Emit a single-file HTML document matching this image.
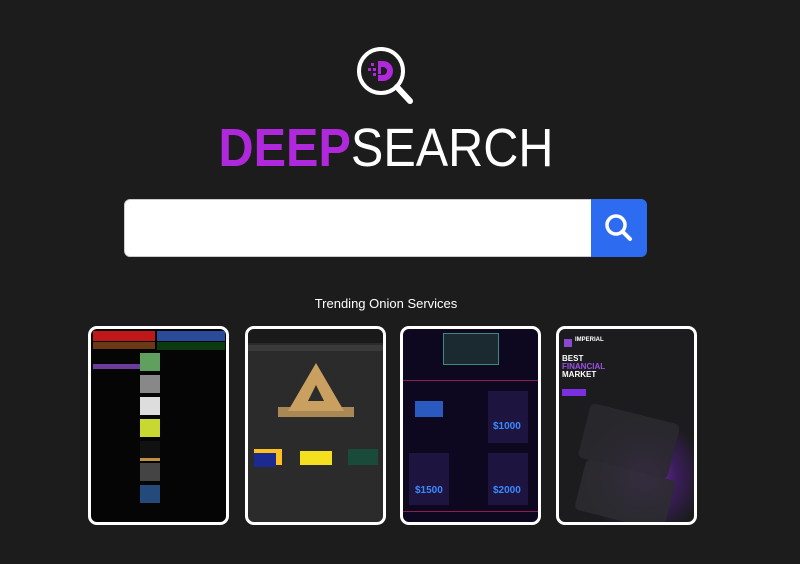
<!DOCTYPE html>
<html><head><meta charset="utf-8"><style>
*{margin:0;padding:0;box-sizing:border-box}
body{width:800px;height:564px;background:#1d1c1d;font-family:"Liberation Sans",sans-serif;position:relative;overflow:hidden}
.abs{position:absolute}
.logo{left:0;width:772px;top:121px;text-align:center;font-size:54px;letter-spacing:0px;line-height:54px;transform:scaleX(0.9);transform-origin:386px 0}
.logo b{color:#b028dc;font-weight:700}
.logo span{color:#fff;font-weight:400}
.search{left:124px;top:199px;width:468px;height:58px;background:#fff;border-radius:6px 0 0 6px;border:1px solid #ccc}
.btn{left:591px;top:199px;width:56px;height:58px;background:#2d6cf1;border-radius:0 6px 6px 0}
.tr{left:0;width:772px;top:296px;text-align:center;color:#fff;font-size:13px}
.card{top:326px;width:141px;height:199px;border:3px solid #fff;border-radius:9px;overflow:hidden}
</style></head><body>
<svg class="abs" style="left:354px;top:44px" width="64" height="64" viewBox="0 0 64 64">
<circle cx="27" cy="27" r="22" fill="none" stroke="#fff" stroke-width="4"/>
<line x1="43" y1="43" x2="56" y2="57" stroke="#fff" stroke-width="6" stroke-linecap="round"/>
<path d="M24 17h5a10 10 0 0 1 0 20h-5v-6h5a4 4 0 0 0 0-8h-2v7h-3z" fill="#b028dc"/>
<rect x="17" y="19" width="3" height="3" fill="#b028dc"/><rect x="14" y="24" width="3" height="3" fill="#b028dc"/><rect x="19" y="24" width="3" height="3" fill="#b028dc"/><rect x="19" y="29" width="3" height="3" fill="#b028dc"/>
</svg>
<div class="abs logo"><b>DEEP</b><span>SEARCH</span></div>
<div class="abs search"></div>
<div class="abs btn"><svg width="56" height="58" viewBox="0 0 56 58"><circle cx="25" cy="26" r="9" fill="none" stroke="#fff" stroke-width="3.5"/><line x1="31.5" y1="32.5" x2="39" y2="40" stroke="#fff" stroke-width="4" stroke-linecap="round"/></svg></div>
<div class="abs tr">Trending Onion Services</div>

<div class="abs card" style="left:88px;background:#050505">
<div class="abs" style="left:2px;top:2px;width:62px;height:10px;background:#c01818"></div>
<div class="abs" style="left:66px;top:2px;width:68px;height:10px;background:#2a4a9a"></div>
<div class="abs" style="left:2px;top:13px;width:62px;height:7px;background:#6a3a18"></div>
<div class="abs" style="left:66px;top:13px;width:68px;height:8px;background:#0c3a10"></div>
<div class="abs" style="left:2px;top:35px;width:47px;height:5px;background:#6b3d9a"></div>
<div class="abs" style="left:49px;top:24px;width:20px;height:18px;background:#5fa05f"></div>
<div class="abs" style="left:49px;top:46px;width:20px;height:18px;background:#888"></div>
<div class="abs" style="left:49px;top:68px;width:20px;height:18px;background:#ddd"></div>
<div class="abs" style="left:49px;top:90px;width:20px;height:18px;background:#c8d830"></div>
<div class="abs" style="left:49px;top:112px;width:20px;height:20px;background:#111;border-bottom:3px solid #c09040"></div>
<div class="abs" style="left:49px;top:134px;width:20px;height:18px;background:#444"></div>
<div class="abs" style="left:49px;top:156px;width:20px;height:18px;background:#234a7a"></div>
</div>

<div class="abs card" style="left:245px;background:#2b2b2b">
<div class="abs" style="left:0;top:0;width:135px;height:14px;background:#1a1a1a"></div>
<div class="abs" style="left:0;top:16px;width:135px;height:6px;background:#3a3a3a"></div>
<svg class="abs" style="left:40px;top:34px" width="56" height="50"><polygon points="28,0 56,48 0,48" fill="#c9a060"/><polygon points="28,22 36,38 20,38" fill="#2b2b2b"/></svg>
<div class="abs" style="left:30px;top:78px;width:76px;height:10px;background:#c9a060;opacity:.8"></div>
<div class="abs" style="left:6px;top:120px;width:28px;height:16px;background:#ffc020"></div>
<div class="abs" style="left:6px;top:124px;width:22px;height:14px;background:#1a2a90"></div>
<div class="abs" style="left:52px;top:122px;width:32px;height:14px;background:#f5e020"></div>
<div class="abs" style="left:100px;top:120px;width:30px;height:16px;background:#1a4a3a"></div>
</div>

<div class="abs card" style="left:400px;background:#0d0720">
<div class="abs" style="left:40px;top:4px;width:56px;height:32px;background:#1b2a30;border:1px solid #3a8a80"></div>
<div class="abs" style="left:0;top:51px;width:135px;height:1px;background:#8a2050"></div>
<div class="abs" style="left:12px;top:72px;width:28px;height:16px;background:#2a5ac0"></div>
<div class="abs" style="left:85px;top:62px;width:40px;height:52px;background:#1e1440"></div>
<div class="abs" style="left:6px;top:124px;width:40px;height:52px;background:#1e1440"></div>
<div class="abs" style="left:85px;top:124px;width:40px;height:52px;background:#1e1440"></div>
<div class="abs" style="left:0;top:182px;width:135px;height:1px;background:#8a2050"></div>
<div class="abs" style="left:90px;top:92px;color:#3a8aff;font-weight:bold;font-size:10px">$1000</div>
<div class="abs" style="left:12px;top:156px;color:#3a8aff;font-weight:bold;font-size:10px">$1500</div>
<div class="abs" style="left:90px;top:156px;color:#3a8aff;font-weight:bold;font-size:10px">$2000</div>
</div>

<div class="abs card" style="left:556px;background:#1c1c1f">
<div class="abs" style="left:5px;top:10px;width:8px;height:8px;background:#8a4ad0"></div>
<div class="abs" style="left:16px;top:8px;color:#fff;font-size:6px;font-weight:bold">IMPERIAL</div>
<div class="abs" style="left:3px;top:26px;color:#fff;font-size:8px;font-weight:bold;line-height:8px">BEST<br><span style="color:#9a50e8">FINANCIAL</span><br>MARKET</div>
<div class="abs" style="left:3px;top:60px;width:24px;height:7px;background:#7a30e0"></div>
<div class="abs" style="left:20px;top:82px;width:130px;height:130px;border-radius:50%;background:radial-gradient(#8a30d0 0%,rgba(90,30,150,.5) 35%,transparent 65%)"></div>
<div class="abs" style="left:24px;top:84px;width:92px;height:56px;background:#2a2a2e;transform:rotate(14deg);border-radius:5px;opacity:.9"></div>
<div class="abs" style="left:20px;top:140px;width:92px;height:52px;background:#2c2c30;transform:rotate(14deg);border-radius:5px;opacity:.9"></div>
</div>
</body></html>
